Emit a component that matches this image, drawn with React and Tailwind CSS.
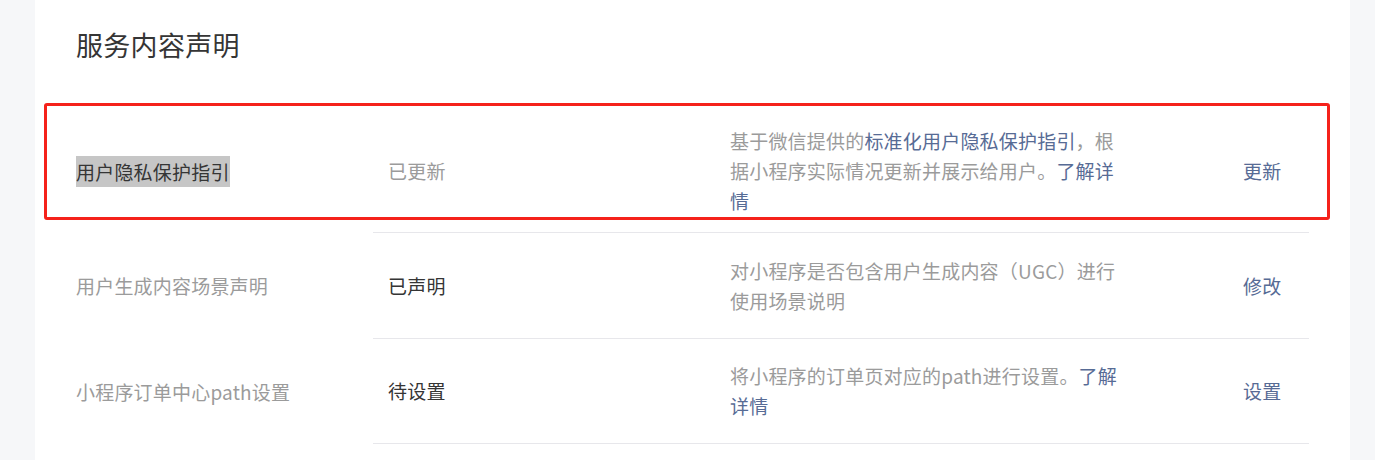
export default function App() {
  const link = "text-[#576b95]";
  return (
    <div className="flex h-[460px] w-[1375px] overflow-hidden bg-[#f6f7f9] font-['Noto_Sans_CJK_SC',sans-serif]">
      <div className="w-[35px] shrink-0" />
      <div className="relative w-[1315px] shrink-0 bg-white pl-[41px]">
        <h1 className="pt-[26px] text-[27px] leading-[37px] font-normal tracking-[0.3px] text-[#353535]">服务内容声明</h1>
        <div className="mt-[41px] text-[19px] tracking-[0.2px]">
          {/* Row 1 */}
          <div className="flex h-[129px]">
            <div className="flex w-[297px] shrink-0 items-center pt-[5px]">
              <span className="inline-block bg-[#c6c6c6] leading-[31px] text-[#353535]">用户隐私保护指引</span>
            </div>
            <div className="flex w-[936px] items-center border-b border-[#e7e7eb] pt-[5px]">
              <div className="w-[342px] shrink-0 pl-[15px] leading-[30px] text-[#9b9b9b]">已更新</div>
              <div className="w-[513px] shrink-0 pl-[15px] leading-[30px] text-[#9b9b9b] whitespace-nowrap">
                基于微信提供的<span className={link}>标准化用户隐私保护指引</span>，根<br />
                据小程序实际情况更新并展示给用户。<span className={link}>了解详</span><br />
                <span className={link}>情</span>
              </div>
              <div className={`pl-[15px] leading-[30px] ${link}`}>更新</div>
            </div>
          </div>
          {/* Row 2 */}
          <div className="flex h-[106px]">
            <div className="flex w-[297px] shrink-0 items-center leading-[30px] text-[#9b9b9b]">用户生成内容场景声明</div>
            <div className="flex w-[936px] items-center border-b border-[#e7e7eb]">
              <div className="w-[342px] shrink-0 pl-[15px] leading-[30px] text-[#353535]">已声明</div>
              <div className="w-[513px] shrink-0 pl-[15px] leading-[30px] text-[#9b9b9b] whitespace-nowrap">
                对小程序是否包含用户生成内容（UGC）进行<br />
                使用场景说明
              </div>
              <div className={`pl-[15px] leading-[30px] ${link}`}>修改</div>
            </div>
          </div>
          {/* Row 3 */}
          <div className="flex h-[105px]">
            <div className="flex w-[297px] shrink-0 items-center leading-[30px] text-[#9b9b9b]">小程序订单中心path设置</div>
            <div className="flex w-[936px] items-center border-b border-[#e7e7eb]">
              <div className="w-[342px] shrink-0 pl-[15px] leading-[30px] text-[#353535]">待设置</div>
              <div className="w-[513px] shrink-0 pl-[15px] leading-[30px] text-[#9b9b9b] whitespace-nowrap">
                将小程序的订单页对应的path进行设置。<span className={link}>了解</span><br />
                <span className={link}>详情</span>
              </div>
              <div className={`pl-[15px] leading-[30px] ${link}`}>设置</div>
            </div>
          </div>
        </div>
        <div className="pointer-events-none absolute left-[9px] top-[103px] h-[117px] w-[1286px] rounded-[3px] border-[3px] border-[#f5221b]" />
      </div>
    </div>
  );
}
